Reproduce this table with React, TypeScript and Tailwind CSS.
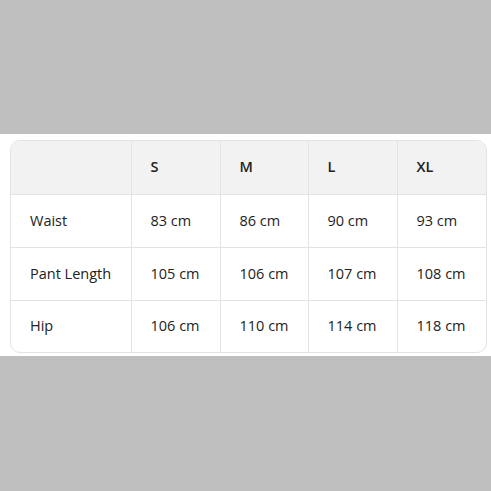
const sizes = ["S", "M", "L", "XL"];

const rows = [
  { label: "Waist", values: ["83 cm", "86 cm", "90 cm", "93 cm"] },
  { label: "Pant Length", values: ["105 cm", "106 cm", "107 cm", "108 cm"] },
  { label: "Hip", values: ["106 cm", "110 cm", "114 cm", "118 cm"] },
];

export default function App() {
  return (
    <div className="h-[491px] w-[491px] bg-[#bfbfbf] pt-[134px] font-['Open_Sans',sans-serif] text-[#222]">
      <div className="bg-white pl-[10px] pr-[4px] pt-[6px] pb-[3px]">
        <div className="overflow-hidden rounded-[10px] border border-[#e3e3e3]">
          <table className="w-full table-fixed border-collapse text-[14.5px]">
            <colgroup>
              <col className="w-[120px]" />
              <col className="w-[89px]" />
              <col className="w-[88px]" />
              <col className="w-[89px]" />
              <col />
            </colgroup>
            <thead>
              <tr className="h-[53px] bg-[#f2f2f2]">
                <th className="border-b border-[#e3e3e3]" />
                {sizes.map((s) => (
                  <th
                    key={s}
                    className="border-b border-l border-[#e3e3e3] pl-[19px] text-left font-semibold"
                  >
                    {s}
                  </th>
                ))}
              </tr>
            </thead>
            <tbody>
              {rows.map((row, i) => (
                <tr
                  key={row.label}
                  className={
                    i < rows.length - 1 ? "h-[53px] border-b border-[#e3e3e3]" : "h-[52px]"
                  }
                >
                  <td className="pl-[19px]">{row.label}</td>
                  {row.values.map((v, j) => (
                    <td key={j} className="border-l border-[#e3e3e3] pl-[19px]">
                      {v}
                    </td>
                  ))}
                </tr>
              ))}
            </tbody>
          </table>
        </div>
      </div>
    </div>
  );
}
